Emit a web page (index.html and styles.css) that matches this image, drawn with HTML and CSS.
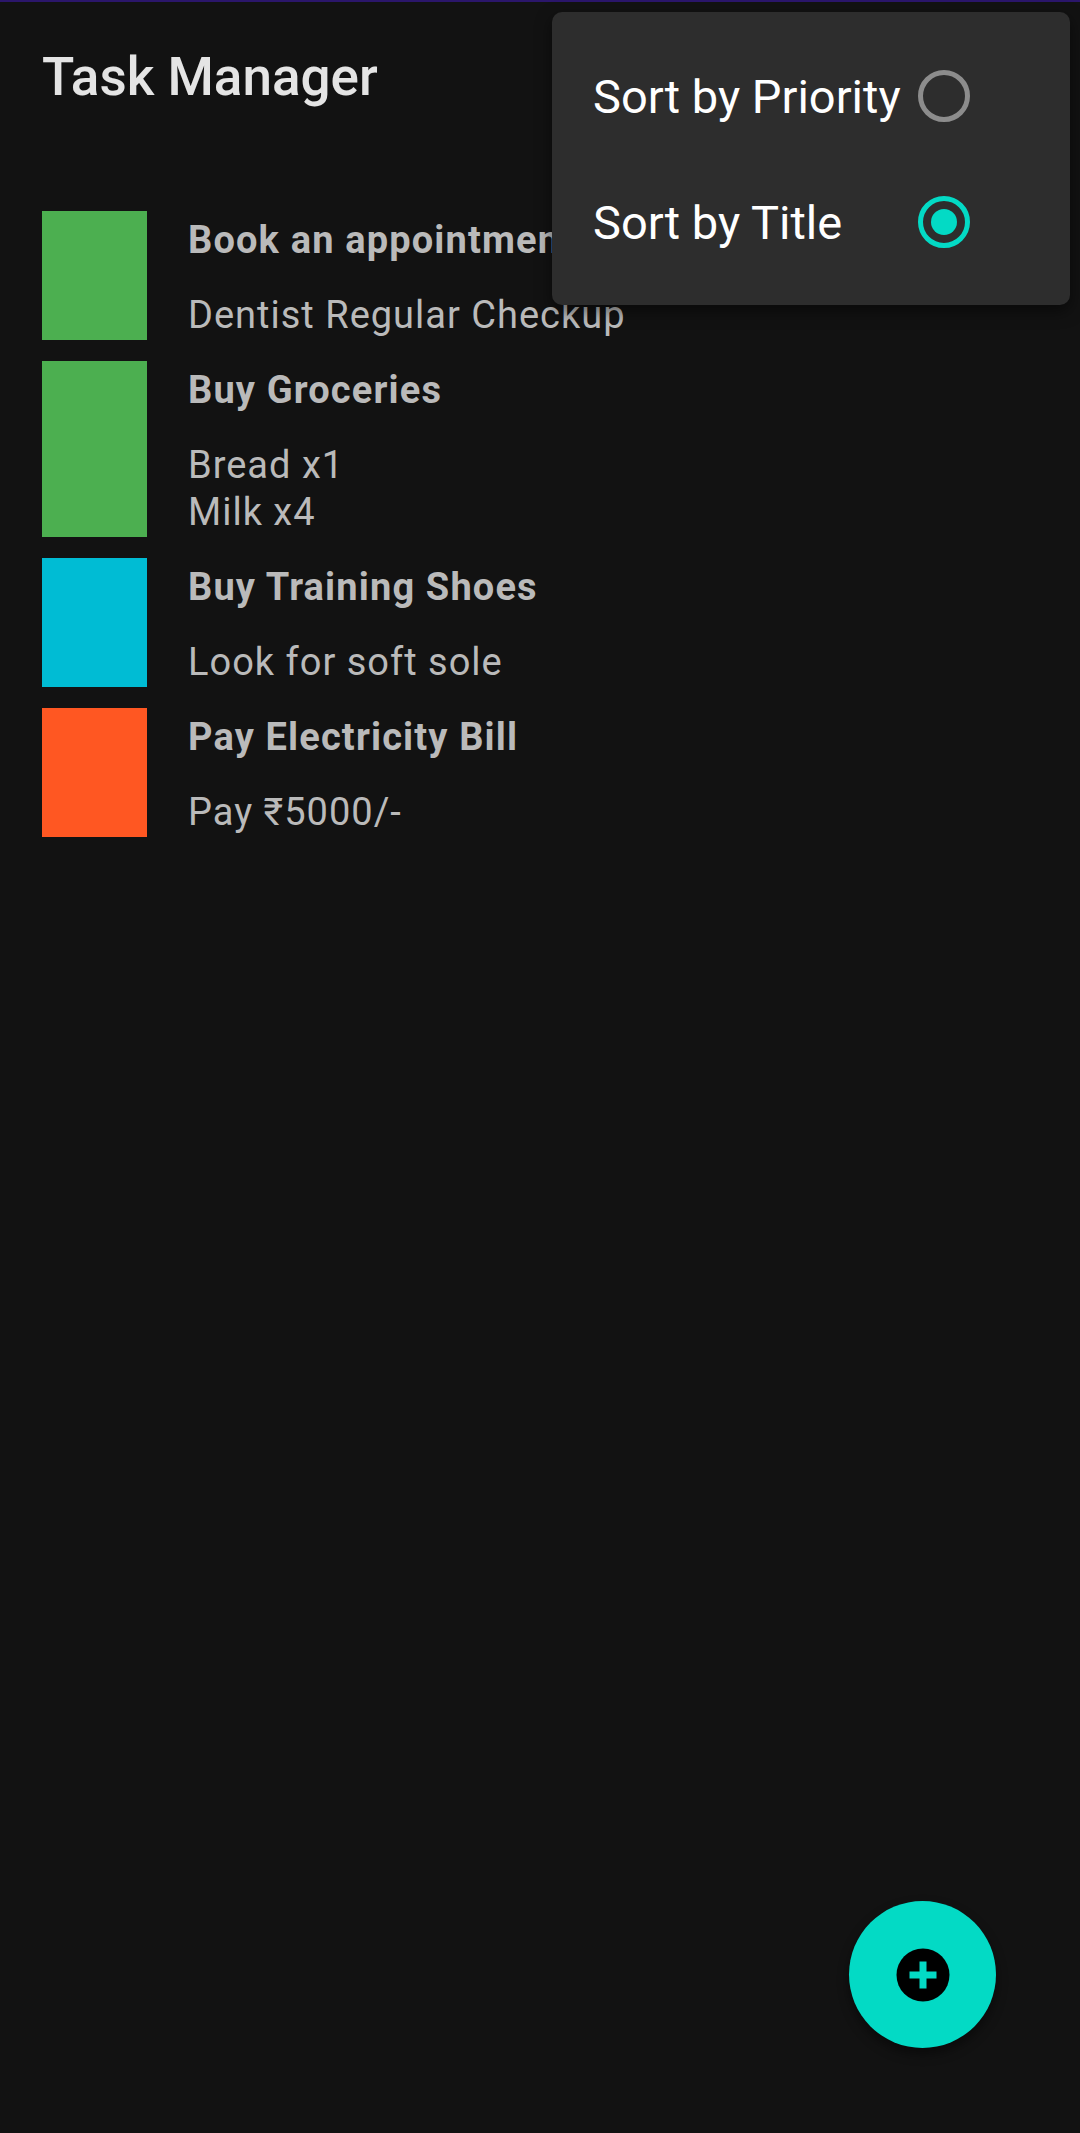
FILE: index.html
```html
<!DOCTYPE html>
<html lang="en">
<head>
<meta charset="utf-8">
<title>Task Manager</title>
<link rel="stylesheet" href="styles.css">
</head>
<body>
<div class="statusbar"></div>
<header class="appbar"><h1 class="app-title">Task Manager</h1></header>
<ul class="tasks">
  <li class="task">
    <span class="prio prio-green"></span>
    <div class="task-body">
      <div class="task-title">Book an appointment</div>
      <div class="task-desc">Dentist Regular Checkup</div>
    </div>
  </li>
  <li class="task">
    <span class="prio prio-green"></span>
    <div class="task-body">
      <div class="task-title">Buy Groceries</div>
      <div class="task-desc">Bread x1<br>Milk x4</div>
    </div>
  </li>
  <li class="task">
    <span class="prio prio-cyan"></span>
    <div class="task-body">
      <div class="task-title">Buy Training Shoes</div>
      <div class="task-desc">Look for soft sole</div>
    </div>
  </li>
  <li class="task">
    <span class="prio prio-orange"></span>
    <div class="task-body">
      <div class="task-title">Pay Electricity Bill</div>
      <div class="task-desc">Pay ₹5000/-</div>
    </div>
  </li>
</ul>

<div class="menu">
  <div class="menu-item">
    <span class="menu-label">Sort by Priority</span>
    <span class="radio"></span>
  </div>
  <div class="menu-item">
    <span class="menu-label">Sort by Title</span>
    <span class="radio radio-checked"></span>
  </div>
</div>

<button class="fab" aria-label="Add task">
  <svg width="54" height="54" viewBox="0 0 54 54">
    <circle cx="27" cy="27" r="26.5" fill="#000"/>
    <rect x="23.5" y="13.5" width="7" height="27" fill="#03dac5"/>
    <rect x="13.5" y="23.5" width="27" height="7" fill="#03dac5"/>
  </svg>
</button>
</body>
</html>
```

FILE: styles.css
```css
* { box-sizing: border-box; }

html, body {
  margin: 0;
  padding: 0;
}

body {
  width: 1080px;
  height: 2133px;
  overflow: hidden;
  background: #121212;
  font-family: Roboto, "Noto Sans", "Liberation Sans", sans-serif;
  position: relative;
}

.statusbar {
  height: 2px;
  background: #2b166b;
}

.appbar {
  padding: 43px 42px 0;
  height: 149px;
}

.app-title {
  margin: 0;
  font-size: 53px;
  line-height: 64px;
  font-weight: 500;
  color: #e4e4e4;
}

.tasks {
  list-style: none;
  margin: 60px 0 0;
  padding: 0 42px;
  display: flex;
  flex-direction: column;
  gap: 21px;
}

.task {
  display: flex;
  align-items: stretch;
}

.prio {
  width: 105px;
  flex: none;
}
.prio-green { background: #4caf50; }
.prio-cyan { background: #00bcd4; }
.prio-orange { background: #ff5722; }

.task-body {
  margin-left: 41px;
  padding: 6px 0 1px;
  color: #bababa;
}

.task-title {
  font-size: 38px;
  line-height: 46px;
  font-weight: 700;
  letter-spacing: 1.15px;
}

.task-desc {
  margin-top: 29px;
  font-size: 38px;
  line-height: 47px;
  font-weight: 400;
  letter-spacing: 1px;
}

.menu {
  position: absolute;
  top: 12px;
  right: 10px;
  width: 518px;
  padding: 21px 0 20px 41px;
  background: #2d2d2d;
  border-radius: 10px;
  box-shadow: 0 6px 16px rgba(0, 0, 0, 0.5);
}

.menu-item {
  display: grid;
  grid-template-columns: 325px 52px;
  align-items: center;
  height: 126px;
}

.menu-label {
  font-size: 47px;
  color: #ffffff;
  white-space: nowrap;
}

.radio {
  width: 52px;
  height: 52px;
  border-radius: 50%;
  border: 5px solid #8c8c8c;
  display: flex;
  align-items: center;
  justify-content: center;
}

.radio-checked {
  border-color: #03dac5;
}

.radio-checked::after {
  content: "";
  width: 26px;
  height: 26px;
  border-radius: 50%;
  background: #03dac5;
}

.fab {
  position: absolute;
  right: 84px;
  bottom: 85px;
  width: 147px;
  height: 147px;
  border-radius: 50%;
  border: none;
  padding: 0;
  background: #03dac5;
  display: flex;
  align-items: center;
  justify-content: center;
  box-shadow: 0 6px 12px rgba(0, 0, 0, 0.45);
}

.fab svg { display: block; }
```
